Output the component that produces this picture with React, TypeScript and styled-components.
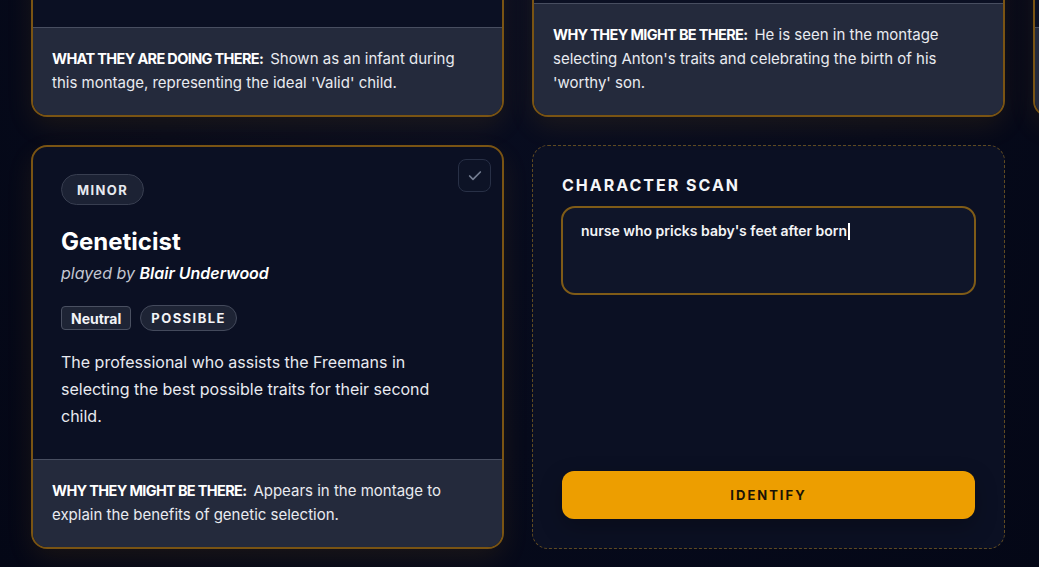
import React, { useLayoutEffect, useRef } from "react";
import styled, { createGlobalStyle } from "styled-components";
import { Check } from "lucide-react";

const Global = createGlobalStyle`
  html, body { margin: 0; padding: 0; overflow: hidden; background: #060a1b; }
  body { font-family: Inter, "Noto Sans", sans-serif; color: #f3f4f6; }
  * { box-sizing: border-box; }
`;

const Page = styled.div`
  padding: 40px 31px 31px;
  background: radial-gradient(ellipse at 50% 0%, #0a0f24 0%, #060a1b 60%, #040716 100%);
  min-height: 100vh;
`;

const Grid = styled.div`
  display: grid;
  grid-template-columns: repeat(3, 473px);
  gap: 28px;
  align-items: stretch;
`;

const Card = styled.article`
  position: relative;
  display: flex;
  flex-direction: column;
  background: #0b1023;
  border: 2px solid #7a5413;
  border-radius: 16px;
  overflow: hidden;
  box-shadow: 0 10px 28px rgba(245, 158, 11, 0.09);
`;

const Body = styled.div`
  flex: 1;
  padding: 27px 28px 29px;
  display: flex;
  flex-direction: column;
  align-items: flex-start;
`;

const CheckBtn = styled.button`
  position: absolute;
  top: 12px;
  right: 11px;
  width: 33px;
  height: 33px;
  border-radius: 8px;
  border: 1px solid #283046;
  background: #0d1326;
  color: #737c90;
  display: flex;
  align-items: center;
  justify-content: center;
  padding: 0;
`;

const Pill = styled.span`
  display: inline-flex;
  align-items: center;
  height: 31px;
  padding: 0 15px;
  border-radius: 999px;
  background: #1c2234;
  border: 1px solid #383e50;
  font-size: 13px;
  font-weight: 700;
  letter-spacing: 1.4px;
  color: #e7e9ef;
`;

const Name = styled.h2`
  margin: 21px 0 0;
  font-size: 24px;
  line-height: 32px;
  font-weight: 700;
  color: #ffffff;
`;

const Played = styled.div`
  font-size: 16px;
  line-height: 24px;
  font-style: italic;
  color: #c3c7d2;
  margin-top: 3px;
  b { color: #ffffff; font-weight: 600; }
`;

const Tags = styled.div`
  display: flex;
  gap: 9px;
  margin-top: 20px;
  align-items: center;
`;

const Tag = styled.span<{ $round?: boolean }>`
  display: inline-flex;
  align-items: center;
  height: ${(p) => (p.$round ? "26px" : "24px")};
  padding: 0 ${(p) => (p.$round ? "10px" : "9px")};
  border-radius: ${(p) => (p.$round ? "999px" : "4px")};
  background: #1e2435;
  border: 1px solid ${(p) => (p.$round ? "#444a5c" : "#4a5061")};
  font-size: ${(p) => (p.$round ? "13px" : "14px")};
  font-weight: 700;
  letter-spacing: ${(p) => (p.$round ? "1.45px" : "0")};
  color: #f3f4f7;
`;

const Desc = styled.p`
  margin: 18px 0 0;
  font-size: 16px;
  line-height: 27px;
  color: #e8eaf0;
`;

const Footer = styled.div`
  background: #242a3c;
  border-top: 1px solid #484e60;
  padding: 19px 20px 20px 19px;
  font-size: 15px;
  line-height: 24px;
  color: #e9ebf0;
`;

const Label = styled.strong`
  font-size: 14.5px;
  font-weight: 700;
  letter-spacing: -0.65px;
  color: #ffffff;
  margin-right: 7px;
`;

const ScanCard = styled.section`
  display: flex;
  flex-direction: column;
  background: #0b1023;
  border: 1px dashed #5f4a22;
  border-radius: 16px;
  padding: 29px 29px 29px;
`;

const ScanTitle = styled.h3`
  margin: 0;
  font-size: 16px;
  line-height: 20px;
  font-weight: 700;
  letter-spacing: 2px;
  color: #f5f6f8;
`;

const Field = styled.div`
  position: relative;
  margin: 11px 0 0 -1px;
  width: calc(100% + 2px);
  height: 89px;
`;

const fieldText = `
  padding: 13px 18px;
  font-family: Inter, "Noto Sans", sans-serif;
  font-size: 14px;
  line-height: 20px;
  font-weight: 600;
  border: 2px solid transparent;
  white-space: pre-wrap;
`;

const Input = styled.textarea`
  ${fieldText}
  display: block;
  width: 100%;
  height: 100%;
  resize: none;
  border-color: #7f5b17;
  border-radius: 14px;
  background: #0f1529;
  color: #f3f4f6;
  caret-color: transparent;
  outline: none;
  margin: 0;
`;

const CaretLayer = styled.div`
  ${fieldText}
  position: absolute;
  inset: 0;
  color: transparent;
  pointer-events: none;
`;

const Caret = styled.span`
  display: inline-block;
  width: 2px;
  height: 17px;
  margin-left: 1px;
  vertical-align: -4px;
  background: #ffffff;
`;

const Identify = styled.button`
  margin-top: auto;
  height: 48px;
  width: 100%;
  border: none;
  border-radius: 12px;
  background: #ed9e00;
  color: #1a1306;
  font-family: Inter, "Noto Sans", sans-serif;
  font-size: 13px;
  font-weight: 700;
  letter-spacing: 2px;
  box-shadow: 0 8px 22px rgba(0, 0, 0, 0.25);
`;

type Char = {
  tier: string;
  name: string;
  actor: string;
  alignment: string;
  status: string;
  desc: string;
  label: string;
  note: string;
};

const chars: Char[] = [
  {
    tier: "MINOR",
    name: "Anton Freeman (Infant)",
    actor: "Unknown",
    alignment: "Neutral",
    status: "POSSIBLE",
    desc: "Vincent's genetically engineered younger brother, born through selection.",
    label: "WHAT THEY ARE DOING THERE:",
    note: "Shown as an infant during this montage, representing the ideal 'Valid' child.",
  },
  {
    tier: "MINOR",
    name: "Antonio Freeman",
    actor: "Elias Koteas",
    alignment: "Neutral",
    status: "LIKELY",
    desc: "Vincent's father, who chooses to conceive his second son through genetic selection.",
    label: "WHY THEY MIGHT BE THERE:",
    note: "He is seen in the montage selecting Anton's traits and celebrating the birth of his 'worthy' son.",
  },
  {
    tier: "MINOR",
    name: "Marie Freeman",
    actor: "Jayne Brook",
    alignment: "Neutral",
    status: "LIKELY",
    desc: "Vincent's mother, present for the births of both of her sons.",
    label: "WHY THEY MIGHT BE THERE:",
    note: "She appears in the montage holding her newborn son.",
  },
  {
    tier: "MINOR",
    name: "Geneticist",
    actor: "Blair Underwood",
    alignment: "Neutral",
    status: "POSSIBLE",
    desc: "The professional who assists the Freemans in selecting the best possible traits for their second child.",
    label: "WHY THEY MIGHT BE THERE:",
    note: "Appears in the montage to explain the benefits of genetic selection.",
  },
];

function CharacterCard({ c, cardRef }: { c: Char; cardRef?: React.Ref<HTMLElement> }) {
  return (
    <Card ref={cardRef}>
      <CheckBtn aria-label="Mark">
        <Check size={16} strokeWidth={2.6} />
      </CheckBtn>
      <Body>
        <Pill>{c.tier}</Pill>
        <Name>{c.name}</Name>
        <Played>
          played by <b>{c.actor}</b>
        </Played>
        <Tags>
          <Tag>{c.alignment}</Tag>
          <Tag $round>{c.status}</Tag>
        </Tags>
        <Desc>{c.desc}</Desc>
      </Body>
      <Footer>
        <Label>{c.label}</Label>
        {c.note}
      </Footer>
    </Card>
  );
}

export default function App() {
  const anchor = useRef<HTMLElement>(null);
  const text = "nurse who pricks baby's feet after born";

  useLayoutEffect(() => {
    const el = anchor.current;
    if (el) {
      const top = el.getBoundingClientRect().top + window.scrollY;
      window.scrollTo(0, top - 145);
    }
  }, []);

  return (
    <>
      <Global />
      <Page>
        <Grid>
          {chars.slice(0, 3).map((c) => (
            <CharacterCard key={c.name} c={c} />
          ))}
          <CharacterCard c={chars[3]} cardRef={anchor} />
          <ScanCard>
            <ScanTitle>CHARACTER SCAN</ScanTitle>
            <Field>
              <Input defaultValue={text} spellCheck={false} />
              <CaretLayer aria-hidden="true">
                {text}
                <Caret />
              </CaretLayer>
            </Field>
            <Identify>IDENTIFY</Identify>
          </ScanCard>
        </Grid>
      </Page>
    </>
  );
}
